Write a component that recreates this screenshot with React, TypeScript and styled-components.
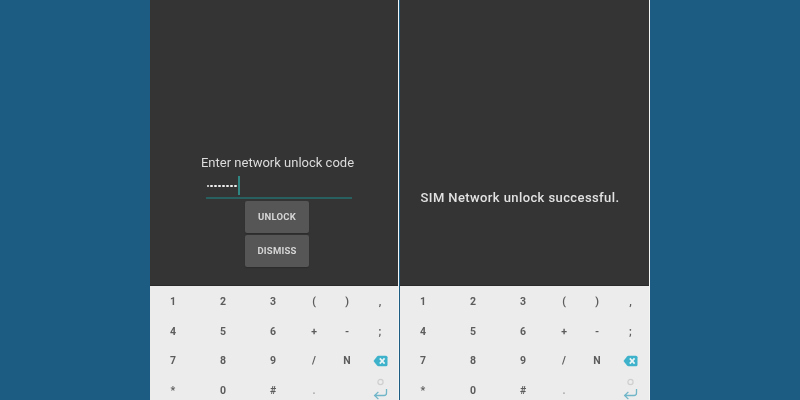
import React from "react";
import styled, { createGlobalStyle } from "styled-components";

const GlobalStyle = createGlobalStyle`
  html, body {
    margin: 0;
    padding: 0;
    background: #1c5b82;
  }
  * {
    box-sizing: border-box;
  }
`;

const Page = styled.div`
  width: 800px;
  height: 400px;
  overflow: hidden;
  display: flex;
  justify-content: center;
  padding-right: 1px;
  gap: 2px;
  background: #1c5b82;
  font-family: Roboto, "Liberation Sans", sans-serif;
`;

const Phone = styled.div<{ $width: number }>`
  width: ${(p) => p.$width}px;
  height: 400px;
  display: flex;
  flex-direction: column;
  box-shadow: 1px 0 0 #f4f6f6;
`;

const Screen = styled.div`
  flex: 0 0 286px;
  background: #343434;
  border-bottom: 1px solid #2a2a2a;
  display: flex;
  flex-direction: column;
  align-items: center;
`;

const UnlockForm = styled.div`
  width: 146px;
  margin-top: 154px;
  margin-left: 9px;
  display: flex;
  flex-direction: column;
  align-items: center;
`;

const Prompt = styled.div`
  width: 170px;
  margin-left: -2px;
  text-align: center;
  color: #dcdcdc;
  font-size: 13px;
  line-height: 17px;
  white-space: nowrap;
  filter: blur(0.3px);
`;

const CodeField = styled.div`
  width: 146px;
  height: 28px;
  padding: 5px 0 0 1px;
  border-bottom: 2px solid #27605f;
  display: flex;
  align-items: flex-start;
`;

const Dots = styled.div`
  display: flex;
  gap: 1.6px;
  height: 20px;
  align-items: center;
`;

const Dot = styled.span`
  width: 2.4px;
  height: 2.4px;
  border-radius: 50%;
  background: #eeeeee;
`;

const Cursor = styled.span`
  width: 2px;
  height: 19px;
  margin-left: 1px;
  background: #2f8682;
`;

const ActionButton = styled.div`
  width: 64px;
  height: 32px;
  margin-top: 2px;
  margin-left: -4px;
  padding-bottom: 2px;
  border-radius: 2px;
  background: #565656;
  box-shadow: 0 1px 1px #2c2c2c;
  color: #d6d6d6;
  font-size: 9.5px;
  font-weight: 700;
  letter-spacing: 0.2px;
  padding-left: 1px;
  display: flex;
  align-items: center;
  justify-content: center;
  filter: blur(0.3px);
`;

const SuccessMessage = styled.div`
  margin-top: 189px;
  margin-left: -9px;
  color: #e2e2e2;
  font-size: 13px;
  font-weight: 500;
  line-height: 17px;
  letter-spacing: 0.4px;
  white-space: nowrap;
  filter: blur(0.3px);
`;

const Keyboard = styled.div`
  flex: 1;
  min-height: 0;
  overflow: hidden;
  background: #ececec;
  padding-top: 1px;
  display: grid;
  grid-template-columns: 46px 54px 46px 36px 30px 1fr;
  grid-auto-rows: 29.5px;
`;

const Key = styled.div<{ $faint?: boolean }>`
  display: flex;
  align-items: center;
  justify-content: center;
  color: ${(p) => (p.$faint ? "#a8a8a8" : "#5c5c5c")};
  font-size: 10.5px;
  font-weight: 700;
  filter: blur(0.4px);
`;

const EnterKey = styled(Key)`
  flex-direction: column;
  justify-content: flex-start;
  padding-top: 2px;
  filter: blur(0.3px);
`;

const BackspaceIcon = () => (
  <svg width="15" height="12" viewBox="0 0 15 12">
    <path
      d="M0.5 6 L4 1.4 Q4.5 0.8 5.4 0.8 H13 Q14.5 0.8 14.5 2.3 V9.7 Q14.5 11.2 13 11.2 H5.4 Q4.5 11.2 4 10.6 Z"
      fill="#3fb2cb"
    />
    <path d="M6.8 3.4 L11.6 8.6 M11.6 3.4 L6.8 8.6" stroke="#e8f4f6" strokeWidth="1.7" />
  </svg>
);

const EnterIcon = () => (
  <svg width="15" height="24" viewBox="0 0 15 24">
    <circle cx="7.5" cy="4" r="2.6" fill="none" stroke="#cfcfcf" strokeWidth="1.2" />
    <path
      d="M13.5 11 V15 Q13.5 17.5 11 17.5 H2 M5.4 13.9 L1.6 17.5 L5.4 21.1"
      fill="none"
      stroke="#6fb6c8"
      strokeWidth="1.3"
    />
  </svg>
);

const keys = ["1", "2", "3", "(", ")", ",", "4", "5", "6", "+", "-", ";", "7", "8", "9", "/", "N"];

const KeyPad = () => (
  <Keyboard>
    {keys.map((k) => (
      <Key key={k}>{k}</Key>
    ))}
    <Key>
      <BackspaceIcon />
    </Key>
    <Key>*</Key>
    <Key>0</Key>
    <Key>#</Key>
    <Key $faint>.</Key>
    <Key />
    <EnterKey>
      <EnterIcon />
    </EnterKey>
  </Keyboard>
);

const App = () => {
  return (
    <Page>
      <GlobalStyle />
      <Phone $width={248}>
        <Screen>
          <UnlockForm>
            <Prompt>Enter network unlock code</Prompt>
            <CodeField>
              <Dots>
                {[0, 1, 2, 3, 4, 5, 6, 7].map((i) => (
                  <Dot key={i} />
                ))}
              </Dots>
              <Cursor />
            </CodeField>
            <ActionButton>UNLOCK</ActionButton>
            <ActionButton>DISMISS</ActionButton>
          </UnlockForm>
        </Screen>
        <KeyPad />
      </Phone>
      <Phone $width={249}>
        <Screen>
          <SuccessMessage>SIM Network unlock successful.</SuccessMessage>
        </Screen>
        <KeyPad />
      </Phone>
    </Page>
  );
};

export default App;
